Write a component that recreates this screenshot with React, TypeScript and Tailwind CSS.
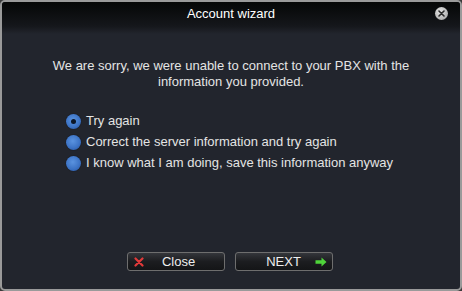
import React from "react";

const options = [
  "Try again",
  "Correct the server information and try again",
  "I know what I am doing, save this information anyway",
];

function Radio({ checked }: { checked: boolean }) {
  return (
    <span className="flex h-[15px] w-[15px] shrink-0 items-center justify-center rounded-full bg-[radial-gradient(circle_at_45%_40%,#5a93e0_0%,#3d74c6_55%,#24509a_100%)] shadow-[0_0_1px_rgba(0,0,0,0.8)]">
      {checked && <span className="h-[5px] w-[5px] rounded-full bg-[#0b1628]" />}
    </span>
  );
}

export default function App() {
  const [selected, setSelected] = React.useState(0);

  return (
    <div
      className="h-[291px] w-[462px] bg-[#3a3a3a]"
      style={{ fontFamily: '"Liberation Sans", Arial, sans-serif' }}
    >
      <div className="flex h-full w-full flex-col overflow-hidden rounded-[5px] border-2 border-[#9a9a9a] bg-[#22252d]">
        <div className="relative flex h-[24px] items-center justify-center bg-gradient-to-b from-[#060707] to-[#15171b]">
          <span className="text-[13px] text-white">Account wizard</span>
          <span className="absolute right-[12px] top-[5px] flex h-[13px] w-[13px] items-center justify-center rounded-full bg-[radial-gradient(circle_at_40%_35%,#e6e6e6,#9c9c9c)]">
            <svg width="7" height="7" viewBox="0 0 7 7">
              <path d="M1 1L6 6M6 1L1 6" stroke="#2a2a2a" strokeWidth="1.6" strokeLinecap="round" />
            </svg>
          </span>
        </div>

        <div className="h-[8px] bg-gradient-to-b from-[#15171b] to-[#22252d]" />

        <p className="mt-[24px] px-10 text-center text-[13px] leading-[16px] text-[#e4e4e4]">
          We are sorry, we were unable to connect to your PBX with the
          <br />
          information you provided.
        </p>

        <div className="mt-[23px] flex flex-col gap-[5px] pl-[64px]">
          {options.map((opt, i) => (
            <label
              key={opt}
              onClick={() => setSelected(i)}
              className="flex h-[16px] cursor-pointer items-center gap-[5px] text-[13px] text-[#e4e4e4]"
            >
              <Radio checked={selected === i} />
              <span>{opt}</span>
            </label>
          ))}
        </div>

        <div className="mt-auto mb-[18px] flex justify-center gap-[10px] pr-[3px]">
          <button
            type="button"
            className="relative flex h-[19px] w-[98px] items-center justify-center rounded-[3px] border border-[#6e6e6e] bg-gradient-to-b from-[#34363b] via-[#1c1d20] to-[#141517] text-[13px] text-[#eeeeee]"
          >
            <svg className="absolute left-[6px] top-[4px]" width="10" height="10" viewBox="0 0 10 10">
              <path d="M1.5 1.5L8.5 8.5M8.5 1.5L1.5 8.5" stroke="#e23a3a" strokeWidth="2.2" strokeLinecap="round" />
            </svg>
            <span className="pl-[6px]">Close</span>
          </button>
          <button
            type="button"
            className="relative flex h-[19px] w-[98px] items-center justify-center rounded-[3px] border border-[#6e6e6e] bg-gradient-to-b from-[#34363b] via-[#1c1d20] to-[#141517] text-[13px] text-[#eeeeee]"
          >
            <span>NEXT</span>
            <svg className="absolute right-[5px] top-[4px]" width="12" height="10" viewBox="0 0 12 10">
              <path d="M0.5 3.2H6.5V0.5L11.5 5L6.5 9.5V6.8H0.5Z" fill="#4fd43a" />
            </svg>
          </button>
        </div>
      </div>
    </div>
  );
}
